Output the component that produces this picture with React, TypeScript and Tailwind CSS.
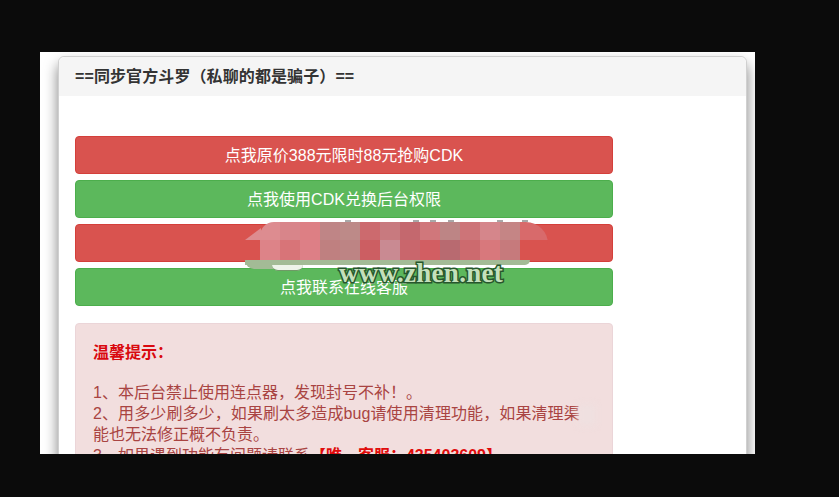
const cellsTop = ["#dd8c90","#d8858a","#dd7f84","#bf8586","#bd8a88","#cc6a6e","#c87a7f","#c4686e","#d0777b","#bd8585","#cd7478","#d5868b","#c58585","#d86a6b"];
const cellsBottom = ["#dd8388","#d87478","#dd7f86","#bf8080","#bd8484","#cc5e62","#c98a92","#c9666c","#d25e62","#b86a70","#cc6a6e","#d8787c","#c67a7c","#d9534f"];
const marks = [85, 62, 11, 12, 43, 19];

function Btn({ color, border, children }: { color: string; border: string; children?: React.ReactNode }) {
  return (
    <div className={`h-[38px] pt-px rounded border flex items-center justify-center text-white text-base ${color} ${border}`}>
      {children}
    </div>
  );
}

export default function App() {
  return (
    <div className="relative w-[839px] h-[497px] bg-[#0b0b0b] overflow-hidden pt-[52px] pl-[40px] font-['Liberation_Sans','Noto_Sans_CJK_SC',sans-serif]">
      <div className="w-[715px] h-[402px] bg-white overflow-hidden pt-[4px] pl-[18px]">
        <div className="w-[689px] h-[500px] rounded-[6px] border border-[#d0d0d0] shadow-[0_8px_14px_rgba(0,0,0,0.5)] bg-white">
          <div className="h-[39px] bg-[#f5f5f5] rounded-t-[6px] flex items-center pl-[16px] text-base font-bold tracking-[0.1px] text-[#333333]">
            ==同步官方斗罗（私聊的都是骗子）==
          </div>
          <div className="pt-[40px] pl-[16px] w-[554px]">
            <div className="flex flex-col gap-[6px]">
              <Btn color="bg-[#d9534f]" border="border-[#d43f3a]">点我原价388元限时88元抢购CDK</Btn>
              <Btn color="bg-[#5cb85c]" border="border-[#4cae4c]">点我使用CDK兑换后台权限</Btn>
              <Btn color="bg-[#d9534f]" border="border-[#d43f3a]" />
              <Btn color="bg-[#5cb85c]" border="border-[#4cae4c]">点我联系在线客服</Btn>
            </div>
            <div className="mt-[17px] rounded border border-[#ebd5d8] bg-[#f2dede] pl-[17px] pr-[14px] pt-[18px] text-base leading-[21px] text-[#a94442]">
              <div className="font-bold text-[#d9090f]">温馨提示：</div>
              <div className="h-[19px]" />
              <div>1、本后台禁止使用连点器，发现封号不补！。</div>
              <div className="tracking-[0.1px]">2、用多少刷多少，如果刷太多造成bug请使用清理功能，如果清理渠</div>
              <div>能也无法修正概不负责。</div>
              <div>3、如果遇到功能有问题请联系<span className="font-bold text-[#e00b0b]">【唯一客服：435403609】</span></div>
            </div>
          </div>
        </div>
      </div>

      {/* pixelated patch laid over the third button */}
      <div className="absolute left-[260px] top-[220px] w-[288px] h-[2px] flex">
        {marks.map((m, i) => (
          <div key={i} style={{ marginLeft: m }} className="w-[6px] h-[2px] bg-[#a8a8a8]" />
        ))}
      </div>
      <div className="absolute left-[245px] top-[228px] w-[16px] h-[12px] bg-[#dd8c90] [clip-path:polygon(0_100%,100%_0,100%_100%)]" />
      <div className="absolute left-[260px] top-[222px] grid grid-cols-[repeat(13,20px)_28px] grid-rows-[18px_20px] rounded-tl-[14px] rounded-tr-[22px] overflow-hidden">
        {cellsTop.concat(cellsBottom).map((c, i) => (
          <div key={i} style={{ backgroundColor: c }} />
        ))}
      </div>
      <div className="absolute left-[245px] top-[260px] w-[285px] h-[5px] bg-[#a3bb96] rounded-br-[10px]" />
      <div className="absolute left-[245px] top-[260px] w-[32px] h-[9px] bg-[#a3bb96] rounded-bl-[10px]" />
      <div className="absolute left-[272px] top-[265px] w-[31px] h-[6px] bg-[#eef3ea] rounded-b-full border-b border-[#6f9a66]" />
      <div className="absolute left-[339px] top-[258px] text-[27px] leading-[31px] tracking-[0.3px] font-bold font-['Liberation_Serif',serif] text-[#c4e0bb] [-webkit-text-stroke:3px_#27562d] [paint-order:stroke_fill]">
        www.zhen.net
      </div>
      <div className="absolute left-[578px] top-[404px] w-[18px] h-[22px] bg-[#efe0e0] blur-[3px]" />
    </div>
  );
}
